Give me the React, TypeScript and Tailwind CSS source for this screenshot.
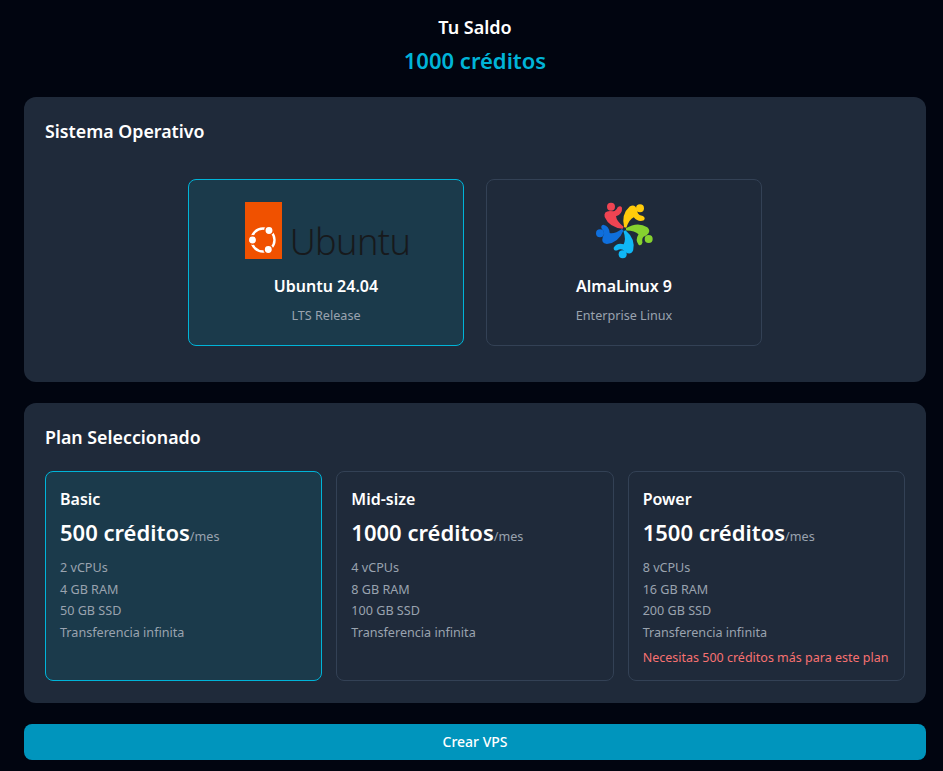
const plans = [
  { name: "Basic", price: "500 créditos", specs: ["2 vCPUs", "4 GB RAM", "50 GB SSD", "Transferencia infinita"], selected: true },
  { name: "Mid-size", price: "1000 créditos", specs: ["4 vCPUs", "8 GB RAM", "100 GB SSD", "Transferencia infinita"] },
  {
    name: "Power",
    price: "1500 créditos",
    specs: ["8 vCPUs", "16 GB RAM", "200 GB SSD", "Transferencia infinita"],
    warning: "Necesitas 500 créditos más para este plan",
  },
];

const selectedCard = "border-[#00b4d8] bg-[#1b3a4b]";
const idleCard = "border-[#334155] bg-[#1f2a3a]";

function UbuntuLogo() {
  return (
    <div className="flex h-[57px] items-center pl-[3px]">
      <div className="flex h-[57px] w-[37px] items-end justify-center bg-[#f05100] pb-[4px]">
        <svg width="30" height="30" viewBox="0 0 30 30">
          <circle cx="15" cy="15" r="11.5" fill="none" stroke="#fff" strokeWidth="2.4" />
          <circle cx="4.5" cy="15" r="4.2" fill="#fff" stroke="#f05100" strokeWidth="1.5" />
          <circle cx="21" cy="5.5" r="4.2" fill="#fff" stroke="#f05100" strokeWidth="1.5" />
          <circle cx="20.3" cy="24.5" r="4.2" fill="#fff" stroke="#f05100" strokeWidth="1.5" />
        </svg>
      </div>
      <span className="ml-2 mt-[22px] text-[36px] leading-none font-light tracking-[-0.6px] text-[#17191c]">Ubuntu</span>
    </div>
  );
}

const almaFigures = [
  { color: "#ef4452", head: [75, 35], angle: 0 },
  { color: "#ffcb0a", head: [162, 40], angle: 72 },
  { color: "#86d22f", head: [188, 132], angle: 144 },
  { color: "#10b7f5", head: [110, 178], angle: 216 },
  { color: "#0f6fdc", head: [42, 115], angle: 288 },
];

function AlmaLogo() {
  return (
    <svg width="57" height="57" viewBox="30 21 171 171">
      {almaFigures.map((f) => (
        <g key={f.color} fill={f.color}>
          <circle cx={f.head[0]} cy={f.head[1]} r="12" />
          <path
            transform={`rotate(${f.angle} 115 102)`}
            d="M56 66 Q52 48 72 48 L82 49 Q90 48 95 37 Q103 30 108 38 Q110 56 90 64 Q92 80 113 95 L110 101 Q70 98 56 66 Z"
          />
        </g>
      ))}
    </svg>
  );
}

export default function App() {
  return (
    <div className="min-h-[771px] bg-[#010510] pt-[15px] pr-[17px] pl-6 font-['Noto_Sans',sans-serif] text-white">
      <div className="text-center">
        <h2 className="text-lg leading-6 font-semibold">Tu Saldo</h2>
        <p className="mt-[7px] text-[22px] leading-7 font-semibold text-[#00b4d8]">1000 créditos</p>
      </div>

      <section className="mt-[23px] h-[285px] rounded-xl bg-[#1f2a3a] p-[21px]">
        <h3 className="text-[17.8px] leading-[27px] font-semibold">Sistema Operativo</h3>
        <div className="mt-[34px] flex justify-center gap-[22px]">
          <div className={`flex h-[167px] w-[276px] flex-col items-center rounded-lg border pt-[22px] ${selectedCard}`}>
            <UbuntuLogo />
            <p className="mt-[17px] text-base leading-5 font-semibold">Ubuntu 24.04</p>
            <p className="mt-[11px] text-[12.6px] leading-[17px] text-[#9aa3af]">LTS Release</p>
          </div>
          <div className={`flex h-[167px] w-[276px] flex-col items-center rounded-lg border pt-[22px] ${idleCard}`}>
            <AlmaLogo />
            <p className="mt-[17px] text-base leading-5 font-semibold">AlmaLinux 9</p>
            <p className="mt-[11px] text-[12.6px] leading-[17px] text-[#9aa3af]">Enterprise Linux</p>
          </div>
        </div>
      </section>

      <section className="mt-[21px] h-[300px] rounded-xl bg-[#1f2a3a] p-[21px]">
        <h3 className="text-[17.8px] leading-[27px] font-semibold">Plan Seleccionado</h3>
        <div className="mt-5 grid h-[210px] grid-cols-3 gap-[14px]">
          {plans.map((p) => (
            <div key={p.name} className={`rounded-lg border px-[14px] pt-[15px] ${p.selected ? selectedCard : idleCard}`}>
              <p className="text-base leading-6 font-semibold">{p.name}</p>
              <p className="mt-[7px] leading-7">
                <span className="text-[22px] font-semibold">{p.price}</span>
                <span className="text-[12.6px] text-[#9aa3af]">/mes</span>
              </p>
              <ul className="mt-[6px] text-[12.6px] text-[#9aa3af]">
                {p.specs.map((s) => (
                  <li key={s} className="leading-[21.6px]">{s}</li>
                ))}
              </ul>
              {p.warning && <p className="mt-[6px] whitespace-nowrap text-[12.5px] leading-[17px] text-[#f87171]">{p.warning}</p>}
            </div>
          ))}
        </div>
      </section>

      <button className="mt-[21px] h-9 w-full rounded-lg bg-[#0095bd] text-sm font-medium text-white">Crear VPS</button>
    </div>
  );
}
